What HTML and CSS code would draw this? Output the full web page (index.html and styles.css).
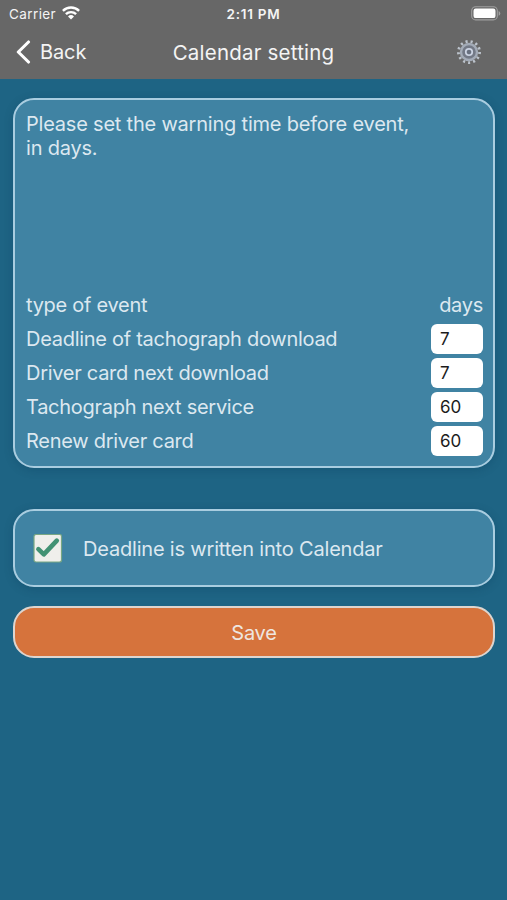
FILE: index.html
```
<!DOCTYPE html>
<html lang="en">
<head>
<meta charset="utf-8">
<title>Calendar setting</title>
<link rel="stylesheet" href="styles.css">
</head>
<body>
<header class="top">
  <div class="status">
    <div class="carrier"><span>Carrier</span>
      <svg width="18" height="14" viewBox="0 0 18 14" fill="none" stroke="#fff" stroke-width="2.4"><path d="M.9 4.9a11.5 11.5 0 0 1 16.2 0M3.9 8.2a7.2 7.2 0 0 1 10.2 0"/><path d="M9 13.6 6 10.5a4.3 4.3 0 0 1 6 0z" fill="#fff" stroke="none"/></svg>
    </div>
    <span class="time">2:11 PM</span>
    <svg class="battery" width="30" height="15" viewBox="0 0 30 15"><rect x=".7" y=".7" width="25.6" height="13.2" rx="4" fill="none" stroke="#a0a0a0" stroke-width="1.1"/><rect x="2.5" y="2.5" width="22" height="9.6" rx="2.2" fill="#fff"/><path d="M27.6 5v4.8q1.7-.8 1.7-2.4T27.6 5z" fill="#a0a0a0"/></svg>
  </div>
  <nav class="nav">
    <div class="back">
      <svg width="16" height="24" viewBox="0 0 16 24" fill="none" stroke="#fff" stroke-width="3.1" stroke-linecap="round" stroke-linejoin="round"><path d="M13.5 2 3.3 12l10.2 10"/></svg>
      <span>Back</span>
    </div>
    <h1>Calendar setting</h1>
    <svg class="gear" width="26" height="26" viewBox="-13 -13 26 26" fill="none">
      <circle r="10.6" stroke="#bcc3cc" stroke-width="2.8" stroke-dasharray="2.1 3.023"/>
      <circle r="8" fill="#737986" stroke="#a3abb7" stroke-width="2.4"/>
      <circle r="3.2" fill="#68707f" stroke="#cbd3e2" stroke-width="1.8"/>
    </svg>
  </nav>
</header>
<main>
  <section class="card events">
    <p>Please set the warning time before event,<br>in days.</p>
    <div class="table">
      <div class="row"><span>type of event</span><span>days</span></div>
      <label class="row"><span>Deadline of tachograph download</span><input value="7"></label>
      <label class="row"><span>Driver card next download</span><input value="7"></label>
      <label class="row"><span>Tachograph next service</span><input value="60"></label>
      <label class="row"><span>Renew driver card</span><input value="60"></label>
    </div>
  </section>
  <section class="card write">
    <svg width="30" height="30" viewBox="0 0 30 30"><rect x="1" y=".5" width="27.5" height="27.5" rx="2" fill="#efefeb" stroke="#78a783" stroke-width="1.2"/><path d="m5.4 15.1 5.4 5.2L23.8 6.6" fill="none" stroke="#429273" stroke-width="4.6" stroke-linecap="round" stroke-linejoin="round"/></svg>
    <span>Deadline is written into Calendar</span>
  </section>
  <button type="button">Save</button>
</main>
</body>
</html>
```
FILE: styles.css
```
* { box-sizing: border-box; }
body {
  margin: 0;
  height: 900px;
  overflow: hidden;
  background: #1e6484;
  font-family: Inter, "Liberation Sans", sans-serif;
  font-size: 20px;
  color: #dce8f0;
}
.top { height: 79px; background: #676767; color: #f4f4f4; }
.status {
  display: grid;
  grid-template-columns: 1fr auto 1fr;
  align-items: center;
  height: 27px;
  padding: 0 6px;
  font-size: 13.5px;
}
.carrier { display: flex; align-items: center; gap: 6px; padding-left: 3px; letter-spacing: .4px; }
.carrier svg { margin-top: -2px; }
.time { font-weight: 600; letter-spacing: .75px; }
.battery { justify-self: end; }
.nav {
  display: grid;
  grid-template-columns: 1fr auto 1fr;
  align-items: center;
  height: 50px;
  padding: 0 25px;
}
.back { display: flex; align-items: center; gap: 9px; margin-left: -10px; letter-spacing: -.1px; }
h1 { margin: 0; font-size: 20.5px; font-weight: 400; letter-spacing: .2px; }
.gear { justify-self: end; }
main { display: flex; flex-direction: column; padding: 19px 12px 0 13px; }
.card {
  background: #4083a3;
  border: 2px solid #a9cde0;
  border-radius: 21px;
  box-shadow: 0 2px 8px rgba(0, 50, 80, .25);
}
.events {
  display: flex;
  flex-direction: column;
  justify-content: space-between;
  height: 370px;
  padding: 12px 10px 7.7px 11px;
}
p { margin: 0; line-height: 24px; letter-spacing: -.21px; }
.row {
  display: flex;
  justify-content: space-between;
  align-items: center;
  height: 34.1px;
  letter-spacing: -.28px;
}
input {
  width: 52px;
  height: 30px;
  padding: 0 9px;
  border: 0;
  border-radius: 6px;
  background: #fff;
  color: #1c1c1c;
  font: 17px Inter, "Liberation Sans", sans-serif;
}
.write {
  display: flex;
  align-items: center;
  gap: 20px;
  height: 78px;
  margin-top: 41px;
  padding: 2px 0 0 18px;
  letter-spacing: -.19px;
}
button {
  height: 52px;
  margin-top: 19px;
  padding-top: 3px;
  border: 2px solid #ddd5cf;
  border-radius: 21px;
  background: #d6733c;
  color: #eee6e0;
  font: 20px Inter, "Liberation Sans", sans-serif;
  letter-spacing: -.2px;
}
```
